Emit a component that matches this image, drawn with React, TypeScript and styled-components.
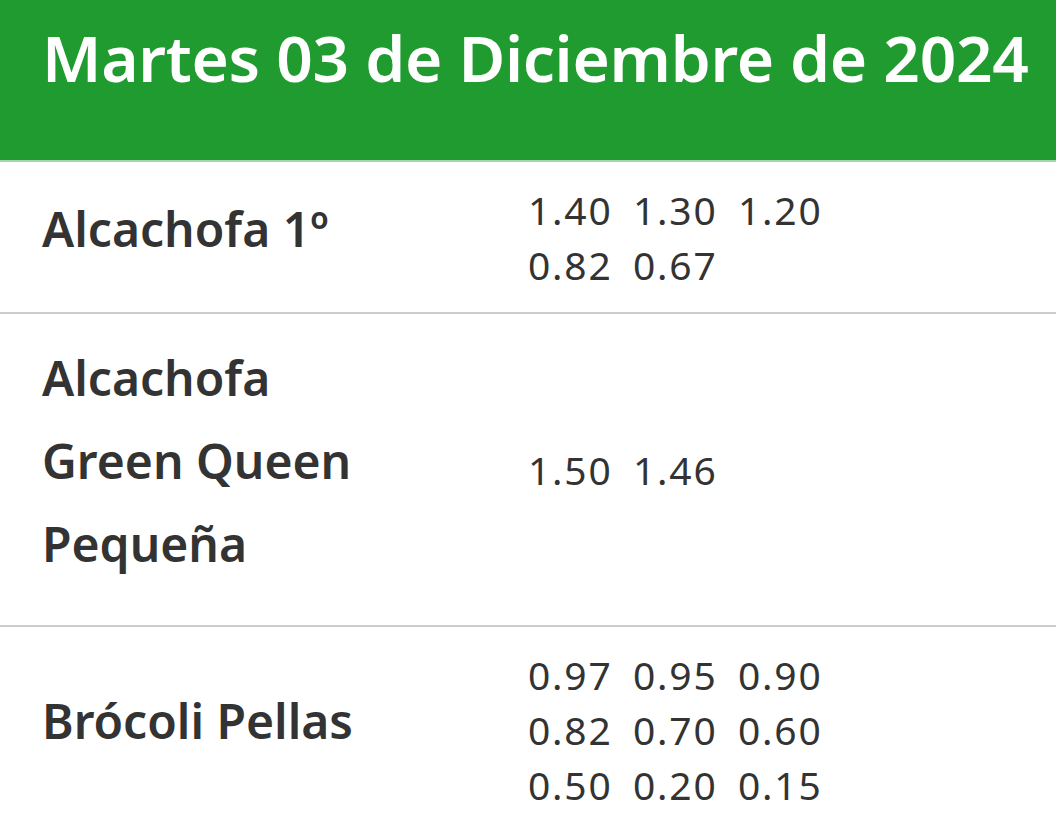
import React from "react";
import styled, { createGlobalStyle } from "styled-components";

const Global = createGlobalStyle`
  html, body { margin: 0; padding: 0; background: #ffffff; }
  body { font-family: "Noto Sans", "Open Sans", sans-serif; color: #333333; }
`;

const Page = styled.div`
  width: 1056px;
  display: flex;
  flex-direction: column;
`;

const Header = styled.header`
  background: #1f9b2f;
  border-bottom: 2px solid #a3d7a9;
  padding: 16px 0 0 42px;
  box-sizing: content-box;
  height: 144px;
`;

const Title = styled.h1`
  margin: 0;
  font-family: "Noto Sans", sans-serif;
  font-weight: 600;
  font-size: 64px;
  line-height: 84px;
  color: #ffffff;
  letter-spacing: -0.3px;
  white-space: nowrap;
`;

const Row = styled.div`
  display: grid;
  grid-template-columns: 528px 1fr;
  align-items: center;
  padding: 20px 0;
  border-bottom: 2px solid #cccccc;
`;

const Name = styled.div`
  padding: 2px 0 20px 42px;
  width: 330px;
  font-family: "Noto Sans", sans-serif;
  font-weight: 600;
  font-size: 48px;
  line-height: 83px;
  color: #333333;
`;

const Prices = styled.div`
  display: grid;
  grid-template-columns: repeat(3, 105px);
  font-family: "Noto Sans", sans-serif;
  font-weight: 400;
  font-size: 39px;
  line-height: 55px;
  letter-spacing: 1.8px;
  color: #333333;
`;

const Price = styled.span``;

const data: { name: string; prices: string[] }[] = [
  { name: "Alcachofa 1º", prices: ["1.40", "1.30", "1.20", "0.82", "0.67"] },
  { name: "Alcachofa Green Queen Pequeña", prices: ["1.50", "1.46"] },
  {
    name: "Brócoli Pellas",
    prices: ["0.97", "0.95", "0.90", "0.82", "0.70", "0.60", "0.50", "0.20", "0.15"],
  },
];

export default function App() {
  return (
    <>
      <Global />
      <Page>
        <Header>
          <Title>Martes 03 de Diciembre de 2024</Title>
        </Header>
        {data.map((row) => (
          <Row key={row.name}>
            <Name>{row.name}</Name>
            <Prices>
              {row.prices.map((p, i) => (
                <Price key={i}>{p}</Price>
              ))}
            </Prices>
          </Row>
        ))}
      </Page>
    </>
  );
}
